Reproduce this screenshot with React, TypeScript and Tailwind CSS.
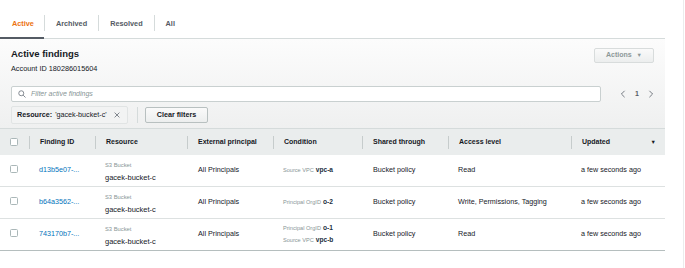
import React from "react";

type Finding = {
  id: string;
  conditions: { label: string; value: string }[];
  access: string;
};

const findings: Finding[] = [
  { id: "d13b5e07-...", conditions: [{ label: "Source VPC", value: "vpc-a" }], access: "Read" },
  { id: "b64a3562-...", conditions: [{ label: "Principal OrgID", value: "o-2" }], access: "Write, Permissions, Tagging" },
  {
    id: "743170b7-...",
    conditions: [
      { label: "Principal OrgID", value: "o-1" },
      { label: "Source VPC", value: "vpc-b" },
    ],
    access: "Read",
  },
];

const cols = "grid grid-cols-[29px_66px_92px_86px_89px_86px_123px_94px]";

function Checkbox() {
  return <div className="h-[8px] w-[8px] rounded-[1.5px] border border-[#aab7b8] bg-white" />;
}

function HeaderCell({ children, first }: { children?: React.ReactNode; first?: boolean }) {
  return (
    <div className="flex items-center">
      {!first && <div className="h-[13px] w-px bg-[#c6cccc]" />}
      <div className="flex flex-1 items-center pl-[10px] pr-[9px]">{children}</div>
    </div>
  );
}

export default function App() {
  return (
    <div
      className="h-[268px] w-[684px] border-r border-[#ececec] bg-white text-[#16191f]"
      style={{ fontFamily: '"Liberation Sans", Arial, sans-serif' }}
    >
      <div className="w-[665px]">
        {/* tabs */}
        <div className="flex h-[39px] items-stretch border-b border-[#d5dbdb]">
          {["Active", "Archived", "Resolved", "All"].map((t, i) => (
            <div key={t} className="flex items-center pt-[11px]">
              {i > 0 && <div className="mb-[4px] h-[16px] w-px bg-[#d5dbdb]" />}
              <div
                className={
                  i === 0
                    ? "mb-[-1px] flex h-full items-center border-b-2 border-[#545b64] pl-[12px] pr-[10px] text-[7.3px] font-bold text-[#ec7211]"
                    : "flex h-full items-center px-[11px] text-[7.3px] font-bold text-[#545b64]"
                }
              >
                {t}
              </div>
            </div>
          ))}
        </div>

        {/* panel */}
        <div className="h-[89px] bg-linear-to-b from-[#fcfcfc] to-[#eff0f0] px-[11px]">
          <div className="flex items-start justify-between pt-[9px]">
            <div>
              <div className="text-[9.5px] font-bold leading-[12px]">Active findings</div>
              <div className="mt-[4px] text-[7.3px] leading-[9px]">Account ID 180286015604</div>
            </div>
            <div className="flex h-[15px] w-[60px] items-center justify-center gap-[5px] rounded-[2px] border border-[#d8dcdc] bg-linear-to-b from-[#fafafa] to-[#eceeee] text-[7px] font-bold text-[#8d9899]">
              Actions
              <span className="text-[5.5px]">▼</span>
            </div>
          </div>

          <div className="mt-[13px] flex items-center">
            <div className="flex h-[16px] w-[590px] items-center gap-[5px] rounded-[2px] border border-[#c9d0d0] bg-white pl-[6px]">
              <svg width="8" height="8" viewBox="0 0 16 16" fill="none" stroke="#687078" strokeWidth="1.6">
                <circle cx="6.5" cy="6.5" r="5" />
                <path d="M10.3 10.3L15 15" />
              </svg>
              <span className="text-[7px] italic text-[#879596]">Filter active findings</span>
            </div>
            <div className="ml-[19px] flex items-center gap-[9px] text-[#545b64]">
              <svg width="6" height="8" viewBox="0 0 6 10" fill="none" stroke="#545b64" strokeWidth="1">
                <path d="M5 1L1 5l4 4" />
              </svg>
              <span className="text-[7px] font-bold">1</span>
              <svg width="6" height="8" viewBox="0 0 6 10" fill="none" stroke="#545b64" strokeWidth="1">
                <path d="M1 1l4 4-4 4" />
              </svg>
            </div>
          </div>

          <div className="mt-[4px] flex items-center">
            <div className="flex h-[18px] w-[117px] items-center gap-[3px] rounded-[2px] border border-[#e1e4e4] bg-[#f2f3f3] pl-[5px] text-[7.2px]">
              <span className="font-bold">Resource:</span>
              <span>'gacek-bucket-c'</span>
              <svg className="ml-[4px]" width="6" height="6" viewBox="0 0 10 10" stroke="#545b64" strokeWidth="1.2">
                <path d="M1 1l8 8M9 1l-8 8" />
              </svg>
            </div>
            <div className="ml-[9px] h-[16px] w-px bg-[#d5dbdb]" />
            <div className="ml-[7px] flex h-[16px] w-[63px] items-center justify-center rounded-[2px] border border-[#b8c0c0] bg-linear-to-b from-[#fafafa] to-[#eceeee] text-[7.2px] font-bold">
              Clear filters
            </div>
          </div>
        </div>

        {/* table */}
        <div className={`${cols} h-[27px] border-t border-[#d5dbdb] bg-[#eaeded] text-[7px] font-bold text-[#16191f]`}>
          <div className="flex items-center pl-[10px]">
            <Checkbox />
          </div>
          <HeaderCell>Finding ID</HeaderCell>
          <HeaderCell>Resource</HeaderCell>
          <HeaderCell>External principal</HeaderCell>
          <HeaderCell>Condition</HeaderCell>
          <HeaderCell>Shared through</HeaderCell>
          <HeaderCell>Access level</HeaderCell>
          <HeaderCell>
            <span className="flex-1">Updated</span>
            <span className="text-[5.5px]">▼</span>
          </HeaderCell>
        </div>

        {findings.map((f, i) => (
          <div
            key={f.id}
            className={`${cols} h-[32px] border-b text-[7.2px] ${
              i === findings.length - 1 ? "border-[#b5bebe]" : "border-[#dde1e1]"
            }`}
          >
            <div className="flex items-center pl-[10px] pb-[3px]">
              <Checkbox />
            </div>
            <div className="flex items-center pl-[10px] text-[#0073bb]">{f.id}</div>
            <div className="flex flex-col justify-center pl-[10px] pt-[2px]">
              <span className="text-[5.8px] leading-[8px] text-[#879596]">S3 Bucket</span>
              <span className="mt-[4px] text-[7.5px] leading-[9px]">gacek-bucket-c</span>
            </div>
            <div className="flex items-center pl-[11px]">All Principals</div>
            <div className="flex flex-col justify-center gap-[2px] pl-[10px] pb-[2px]">
              {f.conditions.map((c) => (
                <div key={c.label} className="flex items-baseline gap-[2px] leading-[9px]">
                  <span className="text-[5.6px] text-[#879596]">{c.label}</span>
                  <span className="text-[6.6px] font-bold text-[#232f3e]">{c.value}</span>
                </div>
              ))}
            </div>
            <div className="flex items-center pl-[11px]">Bucket policy</div>
            <div className="flex items-center pl-[10px]">{f.access}</div>
            <div className="flex items-center pl-[10px]">a few seconds ago</div>
          </div>
        ))}
      </div>
    </div>
  );
}
